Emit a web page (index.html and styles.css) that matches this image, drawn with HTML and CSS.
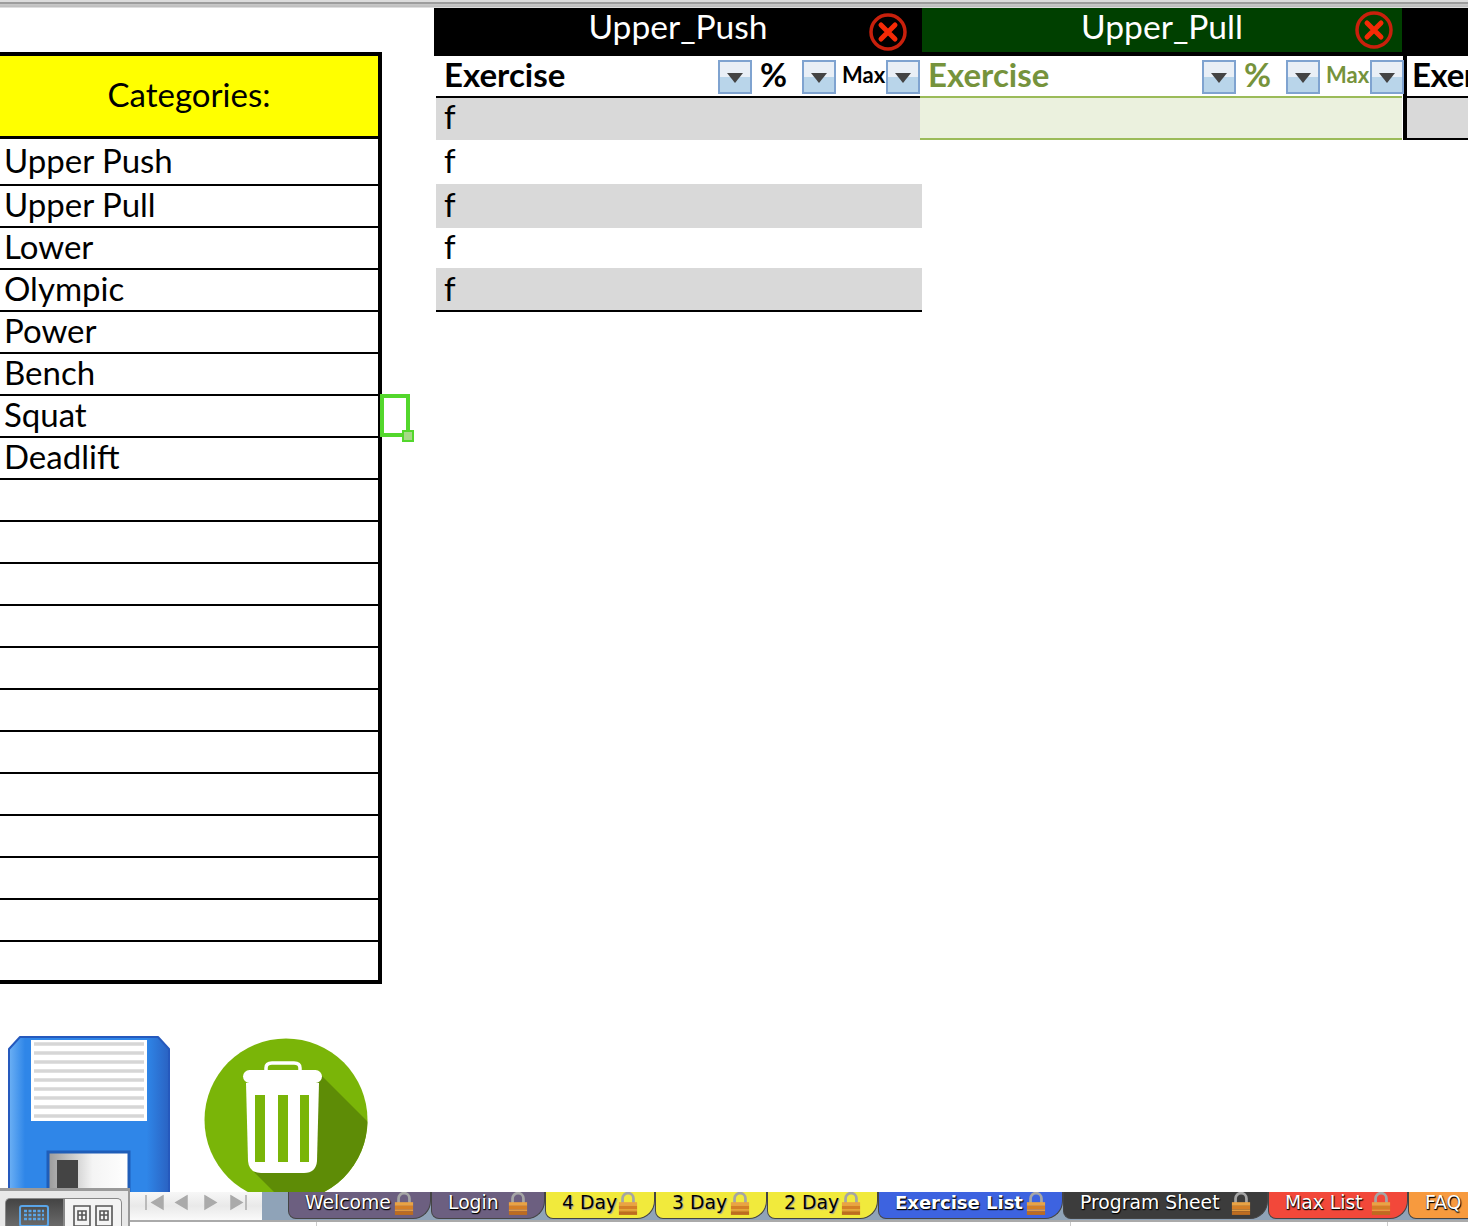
FILE: index.html
```html
<!DOCTYPE html>
<html lang="en">
<head>
<meta charset="UTF-8">
<title>Exercise List</title>
<link rel="stylesheet" href="styles.css">
</head>
<body>
  <svg class="sprite" aria-hidden="true">
    <symbol id="close" viewBox="0 0 38 38">
      <circle cx="19" cy="19" r="17" fill="none" stroke="#c8200c" stroke-width="3.5"/>
      <path d="M12 12 L26 26 M26 12 L12 26" stroke="#f52a06" stroke-width="5" stroke-linecap="round"/>
    </symbol>
    <symbol id="lock" viewBox="0 0 22 26">
      <path d="M5 12 V7 a6 6 0 0 1 12 0 V12" fill="none" stroke="#a5a5a5" stroke-width="3"/>
      <rect x="1" y="11" width="20" height="4" fill="#e9a345"/>
      <rect x="1" y="15" width="20" height="4" fill="#d47f27"/>
      <rect x="1" y="19" width="20" height="2" fill="#e39a3d"/>
      <rect x="1" y="21" width="20" height="4" fill="#bd6c20"/>
    </symbol>
  </svg>

  <div class="topbar"></div>

  <main class="sheet">
    <section class="side">
      <div class="cats">
        <div class="cats-head">Categories:</div>
        <div class="cat cat-first">Upper Push</div>
        <div class="cat">Upper Pull</div>
        <div class="cat">Lower</div>
        <div class="cat">Olympic</div>
        <div class="cat">Power</div>
        <div class="cat">Bench</div>
        <div class="cat">Squat<span class="cell-cursor"></span></div>
        <div class="cat">Deadlift</div>
        <div class="cat"></div><div class="cat"></div><div class="cat"></div>
        <div class="cat"></div><div class="cat"></div><div class="cat"></div>
        <div class="cat"></div><div class="cat"></div><div class="cat"></div>
        <div class="cat"></div><div class="cat"></div><div class="cat cat-last"></div>
      </div>

      <div class="actions">
        <svg class="floppy" viewBox="0 0 162 190" aria-label="save">
          <defs>
            <linearGradient id="diskEdge" x1="0" x2="1" y1="0" y2="0">
              <stop offset="0" stop-color="#6cb0f4"/>
              <stop offset=".1" stop-color="#2f86e8"/>
              <stop offset=".86" stop-color="#2f86e8"/>
              <stop offset="1" stop-color="#2a62c2"/>
            </linearGradient>
            <linearGradient id="shutter" x1="0" x2="1" y1="0" y2="0">
              <stop offset="0" stop-color="#9a9a9a"/>
              <stop offset=".55" stop-color="#f4f4f4"/>
              <stop offset="1" stop-color="#fff"/>
            </linearGradient>
          </defs>
          <path d="M12 1 H150 L161 13 V190 H1 V13 Z" fill="url(#diskEdge)" stroke="#2559bd" stroke-width="2" stroke-linejoin="round"/>
          <rect x="23" y="4" width="116" height="81" fill="#fff"/>
          <path d="M26 8 H136 M26 17 H136 M26 26 H136 M26 35 H136 M26 44 H136 M26 53 H136 M26 62 H136 M26 71 H136 M26 80 H136" stroke="#d6d6d6" stroke-width="3.5"/>
          <rect x="40" y="116" width="81" height="74" fill="url(#shutter)" stroke="#1f5db8" stroke-width="3"/>
          <rect x="49" y="124" width="21" height="66" fill="#444"/>
        </svg>
        <svg class="trash" viewBox="0 0 164 164" aria-label="delete">
          <defs><clipPath id="disc"><circle cx="82" cy="82" r="81.5"/></clipPath></defs>
          <circle cx="82" cy="82" r="81.5" fill="#7ab508"/>
          <path d="M118 38 L170 90 V170 H86 L50 134 Z" fill="#5e8c06" clip-path="url(#disc)"/>
          <path d="M62 33 V30 q0 -5 6 -5 H90 q6 0 6 5 V33" fill="none" stroke="#fff" stroke-width="3.5"/>
          <rect x="39" y="32" width="79" height="13" rx="6.5" fill="#fff"/>
          <path d="M42 45 H115 L113 123 q-1 12 -13 12 H57 q-12 0 -13 -12 Z" fill="#fff"/>
          <path d="M51 57 H61 V124 H51 Z M74 57 H84 V124 H74 Z M96 57 H105 V124 H96 Z" fill="#7ab508"/>
        </svg>
      </div>
    </section>

    <section class="tables">
      <div class="table">
        <div class="table-title">Upper_Push<svg class="close"><use href="#close"/></svg></div>
        <div class="table-cols">
          <div class="col">Exercise<span class="filter"></span></div>
          <div class="col col-pct">%<span class="filter"></span></div>
          <div class="col col-max">Max<span class="filter"></span></div>
        </div>
        <div class="table-rows">
          <div class="row shade">f</div>
          <div class="row">f</div>
          <div class="row shade">f</div>
          <div class="row">f</div>
          <div class="row shade">f</div>
        </div>
      </div>

      <div class="table table-green">
        <div class="table-title">Upper_Pull<svg class="close"><use href="#close"/></svg></div>
        <div class="table-cols">
          <div class="col">Exercise<span class="filter"></span></div>
          <div class="col col-pct">%<span class="filter"></span></div>
          <div class="col col-max">Max<span class="filter"></span></div>
        </div>
        <div class="table-rows">
          <div class="row"></div>
        </div>
      </div>

      <div class="table table-next">
        <div class="table-title"></div>
        <div class="table-cols">
          <div class="col">Exercise</div>
        </div>
        <div class="table-rows">
          <div class="row shade"></div>
        </div>
      </div>
    </section>
  </main>

  <footer class="statusbar">
    <div class="views">
      <div class="view view-on">
        <svg viewBox="0 0 30 22" width="30" height="22"><rect x="1" y="1" width="28" height="20" rx="2" fill="none" stroke="#5aa5e8" stroke-width="2"/><path d="M5 6 H25 M5 10 H25 M5 14 H25" stroke="#5aa5e8" stroke-width="2.5" stroke-dasharray="3 1.5"/></svg>
      </div>
      <div class="view">
        <svg viewBox="0 0 40 22" width="40" height="22"><path d="M1 1 H17 V21 H1 Z M23 1 H39 V21 H23 Z M5 6 H13 V15 H5 Z M27 6 H35 V15 H27 Z M9 6 V15 M31 6 V15 M5 10 H13 M27 10 H35" fill="none" stroke="#555" stroke-width="1.6"/></svg>
      </div>
    </div>

    <div class="tabs-area">
      <div class="tab-row">
        <div class="nav">
          <svg viewBox="0 0 132 28" width="132" height="28"><path d="M16 3 V18 M33 4 L22 10.5 L33 17 Z M57 4 L46 10.5 L57 17 Z M75 4 L86 10.5 L75 17 Z M101 4 L112 10.5 L101 17 Z M116 3 V18" fill="#aaa" stroke="#aaa" stroke-width="1.5"/></svg>
        </div>
        <div class="tabs">
          <div class="tab tab-purple">Welcome<svg class="lock"><use href="#lock"/></svg></div>
          <div class="tab tab-purple">Login<svg class="lock"><use href="#lock"/></svg></div>
          <div class="tab tab-yellow">4 Day<svg class="lock"><use href="#lock"/></svg></div>
          <div class="tab tab-yellow">3 Day<svg class="lock"><use href="#lock"/></svg></div>
          <div class="tab tab-yellow">2 Day<svg class="lock"><use href="#lock"/></svg></div>
          <div class="tab tab-blue">Exercise List<svg class="lock"><use href="#lock"/></svg></div>
          <div class="tab tab-dark">Program Sheet<svg class="lock"><use href="#lock"/></svg></div>
          <div class="tab tab-red">Max List<svg class="lock"><use href="#lock"/></svg></div>
          <div class="tab tab-orange">FAQ</div>
        </div>
      </div>
      <div class="strip"><span></span><span></span><span></span></div>
    </div>
  </footer>
</body>
</html>
```

FILE: styles.css
```css
html,body{margin:0;height:100%}
body{width:1468px;height:1226px;overflow:hidden;background:#fff;color:#000;
     font-family:Lato,"Open Sans",sans-serif}

.sprite{position:absolute;width:0;height:0}

.topbar{height:8px;background:linear-gradient(#dcdcdc 0,#dcdcdc 2px,#9d9d9d 2px,#9d9d9d 4px,#c9c9c9 4px,#bdbdbd 7px,#fff 8px)}

/* ---- sheet ---- */
.sheet{display:flex;height:1184px}
.side{flex:none;width:382px;padding-top:44px}
.tables{flex:none;display:grid;grid-template-columns:488px 480px 66px;margin-left:52px;align-items:start}

.cats{border-top:4px solid #000;border-right:4px solid #000}
.cats-head{height:83px;box-sizing:border-box;padding-bottom:4px;background:#ff0;border-bottom:3px solid #000;
           display:flex;align-items:center;justify-content:center;font-size:33px}
.cat{position:relative;box-sizing:border-box;height:42px;border-bottom:2px solid #000;
     padding-left:4px;font-size:33px;line-height:36px}
.cat-first{height:47px;line-height:42px}
.cat-last{border-bottom-width:4px}

.cell-cursor{position:absolute;left:380px;top:-2px;width:30px;height:43px;box-sizing:border-box;
             border:4px solid #53d72c}
.cell-cursor::after{content:"";position:absolute;right:-8px;bottom:-9px;width:12px;height:12px;
                    box-sizing:border-box;border:2px solid #53d72c;background:#a5d987}

.actions{display:flex;gap:34px;margin-top:52px;padding-left:8px;align-items:flex-start}
.floppy{flex:none;width:162px;height:190px}
.trash{flex:none;width:164px;height:164px;margin-top:2px}

/* ---- tables ---- */
.table{position:relative;min-width:0}
.table-title{position:relative;height:48px;box-sizing:border-box;background:#000;color:#fff;
             text-align:center;font-size:33.6px;line-height:36px}
.close{position:absolute;left:435px;top:5px;width:38px;height:38px}

.table-cols{display:grid;grid-template-columns:318px 84px 84px;height:40px;font-weight:700;
            font-size:33px;line-height:36px;white-space:nowrap}
.col{display:flex;justify-content:space-between;align-items:flex-start;padding-left:10px}
.col-pct{padding-left:8px}
.col-max{padding-left:6px;font-size:22px;line-height:38px}

.filter{flex:none;width:34px;height:34px;margin-top:4px;box-sizing:border-box;border:2px solid #7fa3d0;position:relative;
        background:linear-gradient(#e9eff6 50%,#b9d5ea 50%)}
.filter::after{content:"";position:absolute;left:7px;top:11px;border:8.5px solid transparent;
               border-top:10px solid #444;border-bottom:0}

.table-rows{margin-left:2px;border-top:2px solid #000;border-bottom:2px solid #000;
            display:grid;grid-template-rows:42px 44px 44px 40px 42px}
.row{padding-left:8px;font-size:33px;line-height:40px}
.row:first-child,.row:nth-child(4){line-height:36px}
.shade{background:#d9d9d9}

/* second table, green style */
.table-green{z-index:1}
.table-green .table-title{background:#004000;border-bottom:4px solid #000;line-height:37px}
.table-green .close{left:433px;top:3px}
.table-green .table-cols{grid-template-columns:314px 84px 84px;color:#76933c}
.table-green .col:first-child{padding-left:6px}
.table-green .table-rows{margin-left:-2px;display:block;border-color:#9bbb59}
.table-green .row{height:40px;background:#ebf1de}

/* third table, cut by the window edge */
.table-next .table-cols,.table-next .table-rows{margin-left:1px;border-left:4px solid #000}
.table-next .table-cols{display:block;overflow:hidden}
.table-next .col{padding-left:5px;letter-spacing:-.4px}
.table-next .table-rows{display:block}
.table-next .row{height:40px}

/* ---- status bar ---- */
.statusbar{position:relative;z-index:2;display:flex;height:38px;margin-top:-4px}
.views{flex:none;width:130px;box-sizing:border-box;background:#e8e8e8;border-top:3px solid #9a9a9a;
       border-right:2px solid #9a9a9a;padding:7px 6px 0 5px;display:flex}
.view{flex:1;display:flex;justify-content:center;padding-top:6px;background:#f4f4f4;
      border:1px solid #888;border-bottom:0;border-radius:0 5px 0 0}
.view-on{background:linear-gradient(#444,#6a6a6a);border-radius:5px 0 0 0}

.tabs-area{flex:1;min-width:0;margin-top:4px;display:flex;flex-direction:column}
.tab-row{display:flex;height:28px;background:#8fa3b8;overflow:hidden}
.nav{flex:none;width:132px;height:28px;background:linear-gradient(#f7f7f7,#e9e9e9 50%,#fafafa)}
.nav svg{display:block}

.tabs{display:flex;margin-left:26px}
.tab{flex:none;display:flex;align-items:flex-start;height:27px;box-sizing:border-box;padding:0 16px;
     border:1px solid #444;border-top:0;border-radius:0 0 18px 8px;color:#fff;white-space:nowrap;
     font-family:"DejaVu Sans",sans-serif;font-size:18.8px;line-height:22px;
     text-shadow:1px 1px 1px #000,0 1px 1px #000}
.tab:nth-child(1){width:143px}
.tab:nth-child(2){width:114px}
.tab:nth-child(3){width:110px}
.tab:nth-child(4){width:112px}
.tab:nth-child(5){width:111px}
.tab:nth-child(6){width:185px}
.tab:nth-child(7){width:205px}
.tab:nth-child(8){width:140px}
.tab:nth-child(9){width:80px}
.tab-purple{background:#6c5f80}
.tab-yellow{background:#f1ea3c;color:#000;text-shadow:1px 1px 1px #999}
.tab-blue{background:#3d63e0;font-weight:700;font-size:18px}
.tab-dark{background:#3c3c3c}
.tab-red{background:#f2483a}
.tab-orange{background:#f79a3e}
.lock{flex:none;width:20px;height:24px;margin-left:auto}

.strip{flex:1;display:flex;background:#fff;border-top:2px solid #aaa}
.strip span{flex:none;border-right:1px solid #ccc}
.strip span:nth-child(1){width:186px}
.strip span:nth-child(2){width:753px}
.strip span:nth-child(3){width:316px}
```
